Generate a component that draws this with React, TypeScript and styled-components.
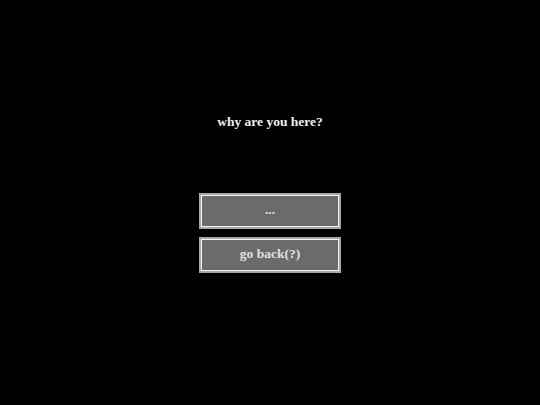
import React from "react";
import styled, { createGlobalStyle } from "styled-components";

const GlobalStyle = createGlobalStyle`
  html, body {
    margin: 0;
    padding: 0;
    background: #000;
  }
  body {
    font-family: "Liberation Serif", "Times New Roman", serif;
  }
`;

const Screen = styled.div`
  width: 540px;
  height: 405px;
  background: #000;
  display: flex;
  flex-direction: column;
  align-items: center;
  padding-top: 114px;
  box-sizing: border-box;
`;

const Question = styled.div`
  color: #f0f0f0;
  font-weight: bold;
  font-size: 13.5px;
  line-height: 16px;
  margin-bottom: 63px;
`;

const Choices = styled.div`
  display: flex;
  flex-direction: column;
  gap: 8px;
`;

const Choice = styled.button`
  width: 142px;
  height: 36px;
  box-sizing: border-box;
  background: #6b6b6b;
  border: 2px solid #a8a8a8;
  box-shadow: inset 0 0 0 1px #f4f4f4;
  color: #e0e0e0;
  font-family: "Liberation Serif", "Times New Roman", serif;
  font-weight: bold;
  font-size: 13.5px;
  padding: 0 0 2px;
  cursor: pointer;
`;

export default function App() {
  return (
    <>
      <GlobalStyle />
      <Screen>
        <Question>why are you here?</Question>
        <Choices>
          <Choice>...</Choice>
          <Choice>go back(?)</Choice>
        </Choices>
      </Screen>
    </>
  );
}
